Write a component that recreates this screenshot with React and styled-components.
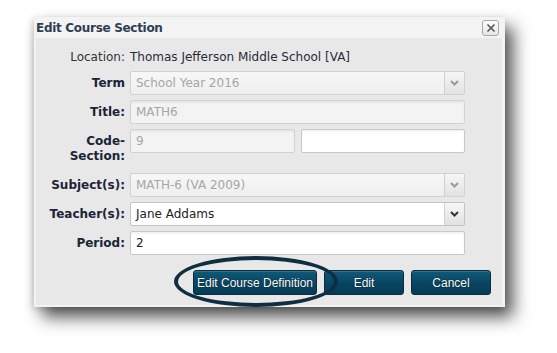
import styled, { createGlobalStyle } from 'styled-components';

const GlobalStyle = createGlobalStyle`
  body {
    margin: 0;
    background: #fff;
    font-family: "DejaVu Sans", Verdana, sans-serif;
  }
`;

function Chevron({ disabled }) {
  return (
    <svg width="9" height="6" viewBox="0 0 9 6">
      <path
        d="M1 1 L4.5 4.5 L8 1"
        fill="none"
        stroke={disabled ? '#9a9a9a' : '#333'}
        strokeWidth="2"
      />
    </svg>
  );
}

function Select({ value, disabled }) {
  return (
    <SelectBox disabled={disabled}>
      <SelectValue disabled={disabled}>{value}</SelectValue>
      <ArrowCell>
        <Chevron disabled={disabled} />
      </ArrowCell>
    </SelectBox>
  );
}

function App() {
  return (
    <>
      <GlobalStyle />
      <Page>
        <Dialog>
          <TitleBar>
            <Title>Edit Course Section</Title>
            <CloseButton aria-label="close">
              <svg width="10" height="10" viewBox="0 0 10 10">
                <path d="M1.5 1.5 L8.5 8.5 M8.5 1.5 L1.5 8.5" stroke="#555" strokeWidth="1.6" />
              </svg>
            </CloseButton>
          </TitleBar>
          <Body>
            <Form>
              <Label plain>Location:</Label>
              <Static>Thomas Jefferson Middle School [VA]</Static>

              <Label>Term</Label>
              <Select value="School Year 2016" disabled />

              <Label>Title:</Label>
              <Input value="MATH6" disabled readOnly />

              <Label top>
                Code-
                <br />
                Section:
              </Label>
              <Split>
                <Input value="9" disabled readOnly />
                <Input defaultValue="" />
              </Split>

              <Label>Subject(s):</Label>
              <Select value="MATH-6 (VA 2009)" disabled />

              <Label>Teacher(s):</Label>
              <Select value="Jane Addams" />

              <Label>Period:</Label>
              <Input defaultValue="2" />
            </Form>
            <Actions>
              <Highlighted>
                <Button wide>Edit Course Definition</Button>
                <Ring />
              </Highlighted>
              <Button>Edit</Button>
              <Button>Cancel</Button>
            </Actions>
          </Body>
        </Dialog>
      </Page>
    </>
  );
}

export default App;

const Page = styled.div`
  width: 557px;
  height: 353px;
  padding: 17px 0 0 34px;
  box-sizing: border-box;
`;

const Dialog = styled.div`
  width: 471px;
  background: #f3f3f3;
  padding: 0 3px 2px 2px;
  box-sizing: border-box;
  box-shadow: 8px 10px 16px rgba(0, 0, 0, 0.68), -2px 2px 6px rgba(0, 0, 0, 0.15);
`;

const TitleBar = styled.div`
  height: 21px;
  display: flex;
  align-items: center;
  justify-content: space-between;
  padding: 0 3px 0 0;
`;

const Title = styled.div`
  font-size: 12px;
  font-weight: bold;
  color: #2e3d52;
  letter-spacing: -0.3px;
`;

const CloseButton = styled.button`
  width: 17px;
  height: 16px;
  margin-top: 1px;
  padding: 0;
  display: flex;
  align-items: center;
  justify-content: center;
  border: 1px solid #a8a8a8;
  border-radius: 3px;
  background: linear-gradient(#fdfdfd, #e6e6e6);
`;

const Body = styled.div`
  background: #e8e8e8;
  padding: 10px 11px 10px 0;
`;

const Form = styled.div`
  display: grid;
  grid-template-columns: 89px 335px;
  column-gap: 5px;
  row-gap: 5px;
  align-items: center;
`;

const Label = styled.div`
  text-align: right;
  font-size: 12px;
  font-weight: ${(p) => (p.plain ? 'normal' : 'bold')};
  color: ${(p) => (p.plain ? '#333' : '#1a2436')};
  line-height: 15px;
  align-self: ${(p) => (p.top ? 'start' : 'center')};
  padding-top: ${(p) => (p.top ? '5px' : '0')};
  padding-bottom: ${(p) => (p.top ? '4px' : '0')};
`;

const Static = styled.div`
  font-size: 12px;
  color: #2a2a3a;
  line-height: 18px;
`;

const Input = styled.input`
  box-sizing: border-box;
  width: 100%;
  height: 24px;
  margin: 0;
  padding: 0 5px;
  font-family: "DejaVu Sans", Verdana, sans-serif;
  font-size: 12px;
  color: #222;
  border: 1px solid #c8c8c8;
  border-radius: 2px;
  background: #fff;
  box-shadow: inset 0 2px 2px rgba(0, 0, 0, 0.05);

  &:disabled {
    color: #a6a6a6;
    background: #f3f3f3;
    border-color: #d2d2d2;
  }
`;

const Split = styled.div`
  display: grid;
  grid-template-columns: 165px 164px;
  column-gap: 6px;
  align-self: start;
`;

const SelectBox = styled.div`
  box-sizing: border-box;
  height: 24px;
  display: flex;
  border: 1px solid ${(p) => (p.disabled ? '#d2d2d2' : '#c4c4c4')};
  border-radius: 2px;
  background: ${(p) => (p.disabled ? 'linear-gradient(#f7f7f7, #efefef)' : '#fff')};
  overflow: hidden;
`;

const SelectValue = styled.div`
  flex: 1;
  padding: 0 5px;
  display: flex;
  align-items: center;
  font-size: 12px;
  color: ${(p) => (p.disabled ? '#a6a6a6' : '#222')};
`;

const ArrowCell = styled.div`
  width: 19px;
  display: flex;
  align-items: center;
  justify-content: center;
  border-left: 1px solid #d0d0d0;
  background: linear-gradient(#f6f6f6, #e2e2e2);
`;

const Actions = styled.div`
  display: flex;
  justify-content: flex-end;
  gap: 7px;
  margin-top: 15px;
`;

const Highlighted = styled.div`
  position: relative;
  display: flex;
`;

const Ring = styled.div`
  position: absolute;
  left: -19px;
  top: -14px;
  width: 164px;
  height: 51px;
  box-sizing: border-box;
  border: 4px solid #0f2e42;
  border-radius: 50%;
  pointer-events: none;
`;

const Button = styled.button`
  width: ${(p) => (p.wide ? '124px' : '80px')};
  height: 25px;
  padding: 0;
  font-family: "Liberation Sans", Arial, sans-serif;
  font-size: 12px;
  color: #fff;
  text-shadow: 0 0 1px #000;
  border: 1px solid #0a2c3c;
  border-radius: 3px;
  background: linear-gradient(#0f5a78, #084563 55%, #063a54);
  box-shadow: inset 0 1px 0 rgba(255, 255, 255, 0.15);
`;
